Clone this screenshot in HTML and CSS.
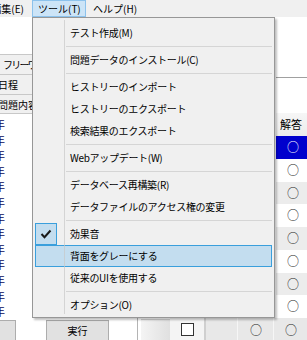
FILE: index.html
```html
<!DOCTYPE html>
<html lang="ja">
<head>
<meta charset="utf-8">
<link rel="stylesheet" href="styles.css">
</head>
<body>
<div class="app">
  <div class="menubar">
    <span class="mb-item mb-first">編集(E)</span>
    <span class="mb-item mb-open">ツール(T)</span>
    <span class="mb-item">ヘルプ(H)</span>
  </div>
  <div class="content">
    <div class="left">
      <div class="left-top"></div>
      <div class="tab tab-free">フリーワード</div>
      <div class="tab tab-cut">日程</div>
      <div class="tab tab-cut">問題内容</div>
      <ul class="years">
        <li>年</li><li>年</li><li>年</li><li>年</li><li>年</li><li>年</li><li>年</li>
        <li>年</li><li>年</li><li>年</li><li>年</li><li>年</li><li>年</li>
      </ul>
    </div>
    <div class="center"></div>
    <div class="right">
      <div class="r-top"></div>
      <div class="r-gap"></div>
      <div class="r-head">解答</div>
      <div class="r-row sel">○</div>
      <div class="r-row">○</div>
      <div class="r-row alt">○</div>
      <div class="r-row">○</div>
      <div class="r-row alt">○</div>
      <div class="r-row">○</div>
      <div class="r-row alt">○</div>
      <div class="r-row">○</div>
    </div>
  </div>
  <div class="footer">
    <span class="btn btn-cut"></span>
    <span class="btn btn-run">実行</span>
    <div class="f-table">
      <div class="f-grad"></div>
      <div class="f-check"><span class="checkbox"></span></div>
      <div class="f-cell f-first"></div>
      <div class="f-cell f-mid">○</div>
      <div class="f-cell f-last">○</div>
    </div>
  </div>

  <div class="dropdown">
    <div class="mi">テスト作成(M)</div>
    <div class="sep"></div>
    <div class="mi">問題データのインストール(C)</div>
    <div class="sep"></div>
    <div class="mi">ヒストリーのインポート</div>
    <div class="mi">ヒストリーのエクスポート</div>
    <div class="mi">検索結果のエクスポート</div>
    <div class="sep"></div>
    <div class="mi">Webアップデート(W)</div>
    <div class="sep"></div>
    <div class="mi">データベース再構築(R)</div>
    <div class="mi">データファイルのアクセス権の変更</div>
    <div class="sep"></div>
    <div class="mi checked"><span class="check"><svg width="12" height="10" viewBox="0 0 12 10"><polyline points="1.5,5 4.5,8.2 10.5,1.5" fill="none" stroke="#1a1a1a" stroke-width="2"/></svg></span>効果音</div>
    <div class="mi hover">背面をグレーにする</div>
    <div class="mi">従来のUIを使用する</div>
    <div class="sep"></div>
    <div class="mi">オプション(O)</div>
  </div>
</div>
</body>
</html>
```

FILE: styles.css
```css
* { box-sizing: border-box; margin: 0; padding: 0; }
html, body { width: 307px; height: 340px; overflow: hidden; background: #fff; }
body {
  font-family: "Noto Sans CJK JP", "Noto Sans", sans-serif;
  font-size: 10px;
  color: #000;
}
.app {
  position: relative;
  width: 307px;
  height: 340px;
  overflow: hidden;
  display: flex;
  flex-direction: column;
}

/* menu bar */
.menubar {
  height: 17px;
  flex: none;
  background: #f0f0f0;
  display: flex;
  white-space: nowrap;
}
.mb-item {
  display: flex;
  align-items: center;
  padding: 0 6px;
  border: 1px solid transparent;
  line-height: 15px;
}
.mb-first {
  width: 46px;
  margin-left: -14px;
  justify-content: flex-end;
  padding: 0 7px 0 0;
}
.mb-open {
  width: 54px;
  padding-left: 5px;
  background: #cce4f7;
  border-color: #8cc2ec;
}

/* content */
.content {
  height: 301px;
  flex: none;
  display: flex;
}
.left {
  width: 33px;
  flex: none;
  border-right: 1px solid #a0a0a0;
  display: flex;
  flex-direction: column;
  overflow: hidden;
  white-space: nowrap;
}
.left-top { height: 37px; flex: none; }
.tab {
  height: 20px;
  flex: none;
  background: #f0f0f0;
  border-top: 1px solid #c8c8c8;
  line-height: 19px;
  padding-left: 3px;
}
.tab-free { letter-spacing: -1.8px; }
.tab-cut { padding-left: 0; text-indent: -2px; }
.tab:last-of-type { border-bottom: 1px solid #c8c8c8; }
.years {
  list-style: none;
  padding-top: 3px;
  color: #0a0a5c;
  font-size: 11px;
}
.years li {
  height: 15.6px;
  line-height: 15.6px;
  text-indent: -6px;
}
.center { flex: 1; }
.right {
  width: 31px;
  flex: none;
  display: flex;
  flex-direction: column;
  white-space: nowrap;
}
.r-top { height: 61px; flex: none; border-bottom: 1px solid #a0a0a0; }
.r-gap { height: 35px; flex: none; }
.r-head {
  height: 23px;
  flex: none;
  background: linear-gradient(#f6f6f6, #ececec);
  line-height: 23px;
  padding-left: 4px;
  font-size: 11px;
}
.r-row {
  height: 22.75px;
  flex: none;
  font-size: 12px;
  line-height: 22.75px;
  padding-left: 11px;
  color: #222;
}
.r-row.alt { background: #ececec; }
.r-row.sel { background: #0000cd; color: #fff; }

/* footer */
.footer {
  height: 22px;
  flex: none;
  display: flex;
  align-items: flex-start;
}
.btn {
  display: block;
  height: 22px;
  margin-top: 2px;
  background: #e1e1e1;
  border: 1px solid #adadad;
  text-align: center;
  line-height: 19px;
  font-size: 10px;
}
.btn-cut { width: 26px; margin-left: -10px; }
.btn-run { width: 63px; margin-left: 30px; }
.f-table {
  flex: 1;
  margin-left: 28px;
  height: 22px;
  display: flex;
  border-left: 1px solid #b4b4b4;
}
.f-grad {
  width: 29px;
  margin-left: 3px;
  margin-top: 1px;
  border-top: 1px solid #d4d4d4;
  background: linear-gradient(to right, #f4f4f4, #e0e0e0);
}
.f-check {
  width: 36px;
  background: #f4f4f4;
  border-right: 2px solid #cfcfcf;
  display: flex;
  justify-content: center;
  padding-top: 5px;
}
.checkbox {
  display: block;
  width: 13px;
  height: 13px;
  background: #fff;
  border: 1px solid #333;
}
.f-cell {
  background: #e8e8e8;
  font-size: 12px;
  line-height: 24px;
  color: #222;
}
.f-first { width: 32px; border-right: 1px solid #f6f6f6; }
.f-mid { width: 36px; padding-left: 12px; border-right: 1px solid #f6f6f6; }
.f-last { flex: 1; padding-left: 11px; }

/* dropdown menu */
.dropdown {
  position: absolute;
  left: 32px;
  top: 17px;
  width: 243px;
  height: 301px;
  background: #f0f0f0;
  border: 1px solid #979797;
  box-shadow: 2px 2px 2px rgba(0, 0, 0, 0.25);
  padding: 4px 2px 2px 2px;
  white-space: nowrap;
  letter-spacing: -0.3px;
}
.dropdown::before {
  content: "";
  position: absolute;
  left: 31px;
  top: 2px;
  bottom: 3px;
  width: 1px;
  background: rgba(200, 200, 200, 0.7);
  z-index: 1;
}
.mi {
  position: relative;
  height: 22px;
  line-height: 20px;
  padding-left: 34px;
  border: 1px solid transparent;
}
.mi.hover {
  background: #c3ddef;
  border-color: #3a9fdc;
}
.check {
  position: absolute;
  left: -1px;
  top: -1px;
  width: 22px;
  height: 22px;
  background: #c3ddef;
  border: 1px solid #3a9fdc;
  display: flex;
  align-items: center;
  justify-content: center;
}
.check svg { display: block; }
.sep {
  height: 5px;
  position: relative;
}
.sep::after {
  content: "";
  position: absolute;
  left: 31px;
  right: 0;
  top: 2px;
  height: 1px;
  background: #d5d5d5;
}
```
